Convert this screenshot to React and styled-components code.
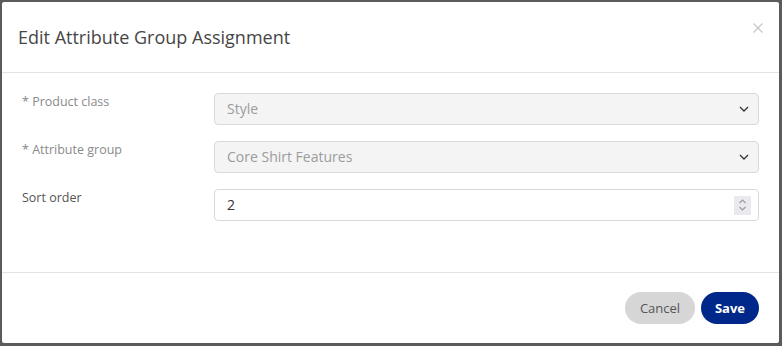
import React from "react";
import styled, { createGlobalStyle } from "styled-components";

const Global = createGlobalStyle`
  html, body { margin: 0; padding: 0; background: #5b5b5b; }
  body { font-family: "Open Sans", "Noto Sans", sans-serif; }
  * { box-sizing: border-box; }
`;

const Backdrop = styled.div`
  width: 782px;
  height: 346px;
  padding: 2px 3px 3px 2px;
  background: #5b5b5b;
`;

const Modal = styled.div`
  width: 777px;
  height: 341px;
  background: #fff;
  border-radius: 2px;
  display: flex;
  flex-direction: column;
`;

const Header = styled.div`
  height: 71px;
  padding: 0 16px;
  display: flex;
  align-items: center;
  justify-content: space-between;
  border-bottom: 1px solid #e3e3e3;
  position: relative;
`;

const Title = styled.h2`
  margin: 0;
  font-size: 18px;
  font-weight: 400;
  color: #464646;
  margin-top: -1px;
`;

const Close = styled.button`
  border: 0;
  background: none;
  padding: 0;
  width: 12px;
  height: 12px;
  position: absolute;
  right: 15px;
  top: 20px;
  display: flex;
  cursor: pointer;
`;

const Body = styled.div`
  flex: 1;
  padding: 20px 20px 0 20px;
  display: flex;
  flex-direction: column;
  gap: 16px;
`;

const Row = styled.div`
  display: grid;
  grid-template-columns: 192px 1fr;
  align-items: start;
`;

const Label = styled.label`
  font-size: 12.5px;
  color: ${(p) => (p.$required ? "#8a8a8a" : "#555")};
`;

const Field = styled.div`
  height: 32px;
  border: 1px solid #d9d9d9;
  border-radius: 4px;
  background: ${(p) => (p.$disabled ? "#f4f4f4" : "#fff")};
  display: flex;
  align-items: center;
  justify-content: space-between;
  padding: 0 9px 1px 12px;
  font-size: 14px;
  color: ${(p) => (p.$disabled ? "#9c9c9c" : "#333")};
`;

const Spinner = styled.div`
  width: 17px;
  height: 19px;
  background: #e9e9ee;
  display: flex;
  align-items: center;
  justify-content: center;
  margin-right: -2px;
  margin-bottom: -1px;
`;

const Footer = styled.div`
  height: 71px;
  border-top: 1px solid #e3e3e3;
  display: flex;
  align-items: center;
  justify-content: flex-end;
  gap: 6px;
  padding: 0 20px 0 20px;
`;

const Button = styled.button`
  height: 32px;
  border: 0;
  border-radius: 16px;
  font-family: "Open Sans", "Noto Sans", sans-serif;
  font-size: 13px;
  padding: 0 0 1px;
  width: ${(p) => p.$w}px;
  background: ${(p) => (p.$primary ? "#00288a" : "#d6d6d6")};
  color: ${(p) => (p.$primary ? "#fff" : "#555")};
  font-weight: ${(p) => (p.$primary ? 700 : 400)};
  cursor: pointer;
`;

const Chevron = () => (
  <svg width="10" height="6" viewBox="0 0 10 6">
    <path d="M1 1 L5 5 L9 1" fill="none" stroke="#333" strokeWidth="1.3" />
  </svg>
);

const SpinIcon = () => (
  <svg width="9" height="14" viewBox="0 0 9 14">
    <path d="M1.5 5 L4.5 2 L7.5 5" fill="none" stroke="#9a9aa5" strokeWidth="1.1" />
    <path d="M1.5 9 L4.5 12 L7.5 9" fill="none" stroke="#9a9aa5" strokeWidth="1.1" />
  </svg>
);

export default function App() {
  return (
    <>
      <Global />
      <Backdrop>
        <Modal>
          <Header>
            <Title>Edit Attribute Group Assignment</Title>
            <Close aria-label="Close">
              <svg width="12" height="12" viewBox="0 0 12 12">
                <path d="M1.5 1.5 L10.5 10.5 M10.5 1.5 L1.5 10.5" stroke="#c8c8c8" strokeWidth="1.3" />
              </svg>
            </Close>
          </Header>
          <Body>
            <Row>
              <Label $required>* Product class</Label>
              <Field $disabled>
                <span>Style</span>
                <Chevron />
              </Field>
            </Row>
            <Row>
              <Label $required>* Attribute group</Label>
              <Field $disabled>
                <span>Core Shirt Features</span>
                <Chevron />
              </Field>
            </Row>
            <Row>
              <Label>Sort order</Label>
              <Field>
                <span>2</span>
                <Spinner>
                  <SpinIcon />
                </Spinner>
              </Field>
            </Row>
          </Body>
          <Footer>
            <Button $w={70}>Cancel</Button>
            <Button $w={58} $primary>Save</Button>
          </Footer>
        </Modal>
      </Backdrop>
    </>
  );
}
